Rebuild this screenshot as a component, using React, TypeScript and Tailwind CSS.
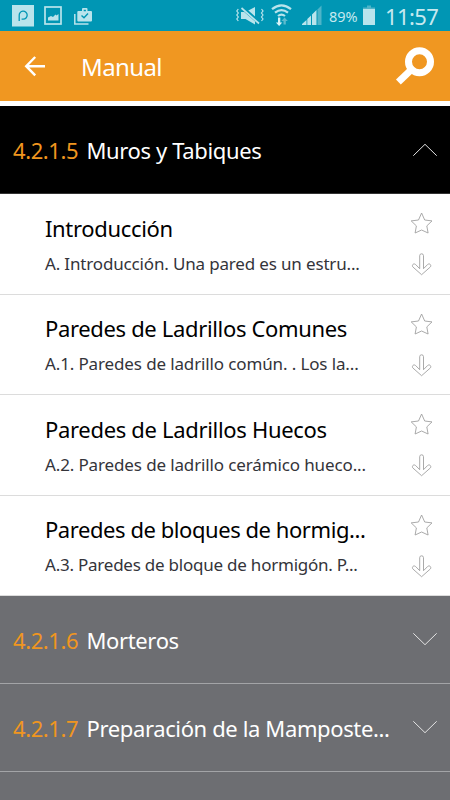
import React from "react";

const entries = [
  { title: "Introducción", text: "A. Introducción. Una pared es un estru...", t: "tracking-[-0.34px]", s: "tracking-[-0.16px]" },
  { title: "Paredes de Ladrillos Comunes", text: "A.1. Paredes de ladrillo común. . Los la...", t: "tracking-[-0.34px]", s: "tracking-[-0.13px]" },
  { title: "Paredes de Ladrillos Huecos", text: "A.2. Paredes de ladrillo cerámico hueco...", t: "tracking-[-0.32px]", s: "tracking-[-0.13px]" },
  { title: "Paredes de bloques de hormig...", text: "A.3. Paredes de bloque de hormigón. P...", t: "tracking-[-0.44px]", s: "tracking-[-0.23px]" },
];

function Chevron({ up = false }: { up?: boolean }) {
  return (
    <svg width="26" height="14" viewBox="0 0 26 14" fill="none" stroke="#e4e4e4" strokeWidth="1" className={up ? "shrink-0" : "mb-[2px] shrink-0"}>
      <path d={up ? "M1.3 12.7 13 1.3 24.7 12.7" : "M1.3 1.3 13 12.7 24.7 1.3"} />
    </svg>
  );
}

function StatusBar() {
  return (
    <div className="flex h-[31px] shrink-0 items-center justify-between bg-[#0096b4]">
      <svg width="100" height="31" viewBox="0 0 100 31" fill="none">
        <rect x="12" y="5" width="22" height="21.5" fill="#b9e4ec" />
        <path d="M19.2 21v-5.4a4 4 0 1 1 4 3.600h-1.600" stroke="#0096b4" strokeWidth="1.3" />
        <rect x="45" y="7" width="16" height="17" stroke="#b9e4ec" strokeWidth="1.7" />
        <path d="M48 20.500v-3l3-1.500 2 1 2.500-2.500 1 1 2-1.500v6.500z" fill="#b9e4ec" />
        <path d="M74.800 14v10h13.700" stroke="#b9e4ec" strokeWidth="1.500" />
        <path d="M77.300 12a1 1 0 0 1 1-1h3.700V9a1 1 0 0 1 1-1h3.500a1 1 0 0 1 1 1v2h3.500a1 1 0 0 1 1 1v8.500a1 1 0 0 1-1 1H78.300a1 1 0 0 1-1-1z" fill="#b9e4ec" />
        <path d="M83.700 10.500h2.200M81.500 15.500l2.500 2.300 4-4.300" stroke="#0096b4" strokeWidth="1.400" />
      </svg>
      <div className="flex h-[31px] items-center">
        <svg width="92" height="31" viewBox="235 0 92 31" fill="none" className="shrink-0">
          <path d="M241 12h4.500l9.500-5v17.500l-9.500-5.500H241z" fill="#b9e4ec" />
          <path d="M241.500 7l18 15.800" stroke="#0096b4" strokeWidth="3.800" />
          <path d="M241.500 8l17.500 15.500" stroke="#b9e4ec" strokeWidth="1.700" />
          <path d="M238.300 9l-1.500 2 1.500 2-1.500 2 1.500 2-1.500 2 1.500 2M261.500 9l1.500 2-1.500 2 1.500 2-1.500 2 1.500 2-1.500 2" stroke="#b9e4ec" strokeWidth="1.200" />
          <path d="M272 9.200q9.500-7.800 19 0M275 12.700q6.500-5.300 13 0M278 16q3.500-2.900 7 0" stroke="#b9e4ec" strokeWidth="2.200" />
          <path d="M278 17.500h2.300v5h2l-3.200 3.500-3.200-3.500h2.100z" fill="#d8f3f7" />
          <path d="M283.500 24.500h2.300v-3.500h2l-3.200-3.500-3.200 3.500h2.100z" fill="#5dbbcd" />
          <path d="M302 25v-1l4.500-4V25zM307.300 25v-6l3.700-3.500V25zM312 25V14.500l4.500-4.500v15z" fill="#b9e4ec" />
          <path d="M317.500 25V9.500l4-4V25z" fill="#4eb4c8" />
        </svg>
        <span className="w-[36px] shrink-0 whitespace-nowrap pl-[2px] pt-px text-[14.5px] leading-[31px] text-[#c5e9ef]">89%</span>
        <svg width="12" height="31" viewBox="363 0 12 31" className="shrink-0">
          <path d="M363 9h12v16h-12z" fill="#b9e4ec" />
          <path d="M367 5.500h4v2h4V9h-12V7.500h4z" fill="#4eb4c8" />
        </svg>
        <span className="w-[75px] shrink-0 whitespace-nowrap pl-[10px] pt-px text-[22px] leading-[31px] tracking-[-0.6px] text-[#c5e9ef]">11:57</span>
      </div>
    </div>
  );
}

function Section({ num, title, up = false }: { num: string; title: string; up?: boolean }) {
  return (
    <div className="flex h-full items-center pl-[13px] pr-[12px] text-[22px] leading-[30px] text-white">
      <span className="w-[73.5px] shrink-0 whitespace-nowrap tracking-[-0.4px] text-[#f0961f]">{num}</span>
      <span className="flex-1 whitespace-nowrap tracking-[-0.37px]">{title}</span>
      <Chevron up={up} />
    </div>
  );
}

export default function App() {
  return (
    <div className="flex h-[800px] w-[450px] flex-col overflow-hidden bg-white font-['Noto_Sans',sans-serif]">
      <StatusBar />
      <header className="flex h-[70px] shrink-0 items-center bg-[#f09721] text-white">
        <svg width="22" height="22" viewBox="0 0 22 22" fill="none" stroke="#fff" strokeWidth="2.400" className="ml-[24px]">
          <path d="M21 11.200H3M11.200 2 2.200 11.200l9 9.200" />
        </svg>
        <h1 className="ml-[35px] flex-1 pt-px text-[24px] leading-[34px] tracking-[-0.6px]">Manual</h1>
        <svg width="40" height="38" viewBox="0 0 40 38" fill="none" stroke="#fff" className="mr-[15px]">
          <circle cx="24.500" cy="14.700" r="11" strokeWidth="7" />
          <path d="M17 22 3.400 35" strokeWidth="7" />
        </svg>
      </header>
      <div className="mt-[5px] h-[88px] shrink-0 border-b border-[#333] bg-black pt-px">
        <Section num="4.2.1.5" title="Muros y Tabiques" up />
      </div>
      {entries.map((e) => (
        <article key={e.title} className="flex h-[100.500px] shrink-0 border-b border-[#dcdcdc] pl-[45px]">
          <div className="flex-1 pt-[18.500px]">
            <h2 className={`whitespace-nowrap text-[22px] leading-[30px] text-black ${e.t}`}>{e.title}</h2>
            <p className={`mt-[9px] whitespace-nowrap text-[17px] leading-[24px] text-[#34343a] ${e.s}`}>{e.text}</p>
          </div>
          <svg width="24" height="99" viewBox="0 0 24 99" fill="none" stroke="#a0a0a0" strokeWidth="0.900" strokeLinejoin="round" className="mr-[16px] shrink-0">
            <path d="M11.600 19l3.100 7 7.300.9-5.200 5 1.300 7.100-6.500-3-6.500 3 1.300-7.100L1.200 26.900l7.300-.9z" />
            <path d="M9.700 74.700V61.700a1.900 1.900 0 0 1 3.800 0v13l4.100-4.200c2-1.700 4.200.7 2.700 2.500l-8.700 7.700-8.700-7.700c-1.500-1.800.7-4.200 2.700-2.500z" />
          </svg>
        </article>
      ))}
      <div className="h-[88px] shrink-0 border-b border-[#a3a4a7] bg-[#6d6e72] pt-px">
        <Section num="4.2.1.6" title="Morteros" />
      </div>
      <div className="h-[88px] shrink-0 border-b border-[#a3a4a7] bg-[#6d6e72] pt-px">
        <Section num="4.2.1.7" title="Preparación de la Mamposte..." />
      </div>
      <div className="flex-1 bg-[#6d6e72]" />
    </div>
  );
}
